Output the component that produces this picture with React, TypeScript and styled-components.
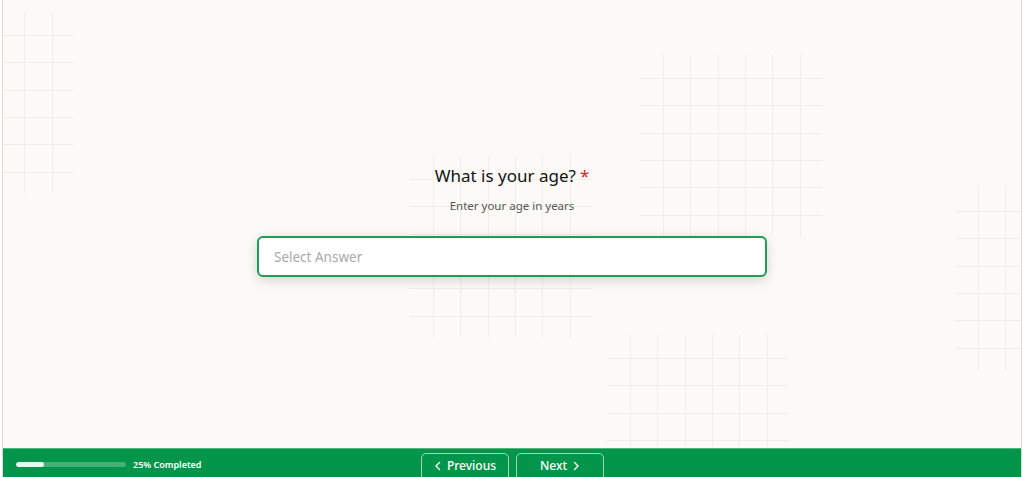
import styled, { createGlobalStyle } from "styled-components";

const GlobalStyle = createGlobalStyle`
  html, body {
    margin: 0;
    padding: 0;
    background: #ffffff;
    overflow: hidden;
  }
  body {
    font-family: "Noto Sans", "Open Sans", sans-serif;
  }
`;

const Frame = styled.div`
  position: relative;
  margin-left: 2px;
  width: 1018px;
  height: 477px;
  border-left: 1px solid #d9d9d6;
  border-right: 1px solid #d9d9d6;
  background: #fbfaf6;
  overflow: hidden;
  display: flex;
  flex-direction: column;
`;

const Main = styled.main`
  height: 448px;
  flex-shrink: 0;
  display: flex;
  flex-direction: column;
  align-items: center;
  justify-content: center;
  padding-bottom: 6px;
  box-sizing: border-box;
`;

const Question = styled.div`
  position: relative;
  z-index: 1;
  display: flex;
  flex-direction: column;
  align-items: center;
`;

const Title = styled.h2`
  margin: 0;
  font-size: 17px;
  font-weight: 400;
  color: #141414;
  line-height: 22px;
`;

const Required = styled.span`
  color: #e0201c;
  margin-left: 4px;
`;

const Hint = styled.p`
  margin: 11px 0 0;
  font-size: 11.5px;
  color: #555;
  line-height: 16px;
`;

const AnswerBox = styled.div`
  margin-top: 22px;
  height: 37px;
  width: 476px;
  display: flex;
  align-items: center;
  padding: 0 15px;
  background: #fff;
  border: 2px solid #1f9d55;
  border-radius: 6px;
  box-shadow: 0 3px 12px rgba(0, 0, 0, 0.16);
  font-size: 13.5px;
  color: #a9a9a9;
`;

const Footer = styled.footer`
  position: relative;
  z-index: 2;
  height: 36px;
  flex-shrink: 0;
  background: #03964a;
  border-top: 1px solid #4db87c;
  display: flex;
  align-items: flex-start;
  padding: 0 13px;
`;

const Progress = styled.div`
  display: flex;
  align-items: center;
  gap: 7px;
  height: 31px;
  width: 405px;
`;

const Track = styled.div`
  width: 110px;
  height: 5px;
  border-radius: 3px;
  background: rgba(255, 255, 255, 0.25);
  overflow: hidden;
`;

const Fill = styled.div`
  height: 100%;
  border-radius: 3px;
  background: #eaf6ef;
`;

const ProgressLabel = styled.span`
  font-size: 9px;
  font-weight: 600;
  color: #fff;
`;

const Nav = styled.div`
  display: flex;
  gap: 7px;
  padding-top: 4px;
`;

const NavButton = styled.button`
  height: 28px;
  width: 88px;
  display: flex;
  align-items: flex-start;
  justify-content: center;
  gap: 5px;
  padding: 4px 0 0;
  background: transparent;
  border: 1px solid rgba(255, 255, 255, 0.6);
  border-radius: 5px;
  color: #fff;
  font-family: inherit;
  font-size: 12px;
  font-weight: 500;
  line-height: 16px;
  cursor: pointer;

  svg {
    margin-top: 3px;
  }
`;

const GridTile = styled.svg`
  position: absolute;
  width: 182px;
  height: 182px;
  pointer-events: none;
`;

const tiles = [
  { x: -111, y: 12 },
  { x: 637, y: 55 },
  { x: 952, y: 188 },
  { x: 407, y: 156 },
  { x: 604, y: 335 },
];

const lines = [0, 1, 2, 3, 4, 5].map((i) => 23 + i * 27.3);

function Grid({ x, y }: { x: number; y: number }) {
  return (
    <GridTile viewBox="0 0 182 182" style={{ left: x, top: y }}>
      {lines.map((p) => (
        <g key={p} stroke="#f0eee9" strokeWidth="1">
          <line x1={Math.round(p) + 0.5} y1="0" x2={Math.round(p) + 0.5} y2="182" />
          <line x1="0" y1={Math.round(p) + 0.5} x2="182" y2={Math.round(p) + 0.5} />
        </g>
      ))}
    </GridTile>
  );
}

const Chevron = ({ dir }: { dir: "left" | "right" }) => (
  <svg width="8" height="10" viewBox="0 0 8 10" fill="none">
    <path
      d={dir === "left" ? "M5.5 1.5 L2 5 L5.5 8.5" : "M2.5 1.5 L6 5 L2.5 8.5"}
      stroke="#fff"
      strokeWidth="1.4"
      strokeLinecap="round"
      strokeLinejoin="round"
    />
  </svg>
);

export default function App() {
  const completed = 25;
  return (
    <>
      <GlobalStyle />
      <Frame>
        {tiles.map((t, i) => (
          <Grid key={i} x={t.x} y={t.y} />
        ))}
        <Main>
          <Question>
            <Title>
              What is your age?<Required>*</Required>
            </Title>
            <Hint>Enter your age in years</Hint>
            <AnswerBox>Select Answer</AnswerBox>
          </Question>
        </Main>
        <Footer>
          <Progress>
            <Track>
              <Fill style={{ width: `${completed}%` }} />
            </Track>
            <ProgressLabel>{completed}% Completed</ProgressLabel>
          </Progress>
          <Nav>
            <NavButton>
              <Chevron dir="left" />
              Previous
            </NavButton>
            <NavButton>
              Next
              <Chevron dir="right" />
            </NavButton>
          </Nav>
        </Footer>
      </Frame>
    </>
  );
}
